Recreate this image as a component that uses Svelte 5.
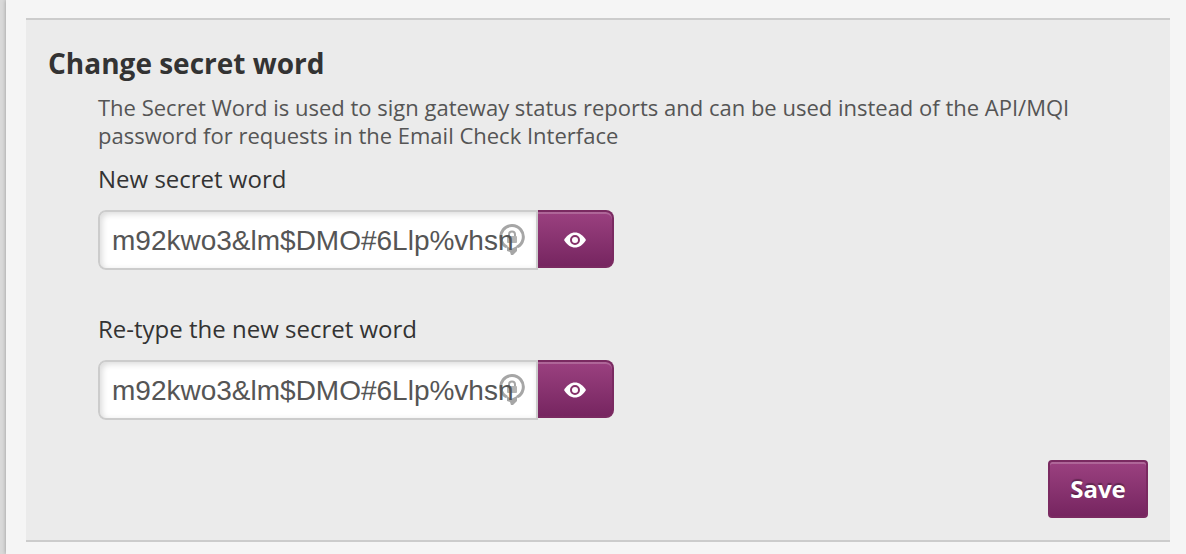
<script>
  let fields = $state([
    { id: 'new-secret', label: 'New secret word', value: 'm92kwo3&lm$DMO#6Llp%vhsn', visible: true },
    { id: 'retype-secret', label: 'Re-type the new secret word', value: 'm92kwo3&lm$DMO#6Llp%vhsn', visible: true }
  ]);

  const save = (event) => {
    event.preventDefault();
  };
</script>

<main>
  <form class="panel" onsubmit={save}>
    <h2>Change secret word</h2>

    <div class="content">
      <p class="description">
        The Secret Word is used to sign gateway status reports and can be used instead of the API/MQI
        password for requests in the Email Check Interface
      </p>

      {#each fields as field}
        <div class="field">
          <label for={field.id}>{field.label}</label>
          <div class="input-row">
            <div class="input-wrap">
              <svg class="key-icon" width="28" height="36" viewBox="0 0 28 36" aria-hidden="true">
                <path d="M9 24 A11.3 11.3 0 1 1 19 24" fill="none" stroke="#a6a6a6" stroke-width="3" />
                <path d="M9 23 L13 26 L19 23 L19 28 L15 32 L13 32 L12 29 L9 28 Z" fill="#a6a6a6" />
                <path d="M11 13 V11.5 A3 3 0 0 1 17 11.5 V13" fill="none" stroke="#a6a6a6" stroke-width="2" />
                <rect x="9" y="13" width="10" height="7" rx="1" fill="#b3b3b3" />
              </svg>
              <input id={field.id} type={field.visible ? 'text' : 'password'} autocomplete="off" spellcheck="false" bind:value={field.value} />
            </div>
            <button class="toggle" type="button" aria-label="Show or hide" onclick={() => (field.visible = !field.visible)}>
              <svg width="22" height="16" viewBox="0 0 22 16" aria-hidden="true">
                <path d="M0 8 C3 3 7 0.5 11 0.5 S19 3 22 8 C19 13 15 15.5 11 15.5 S3 13 0 8 Z" fill="#fff" />
                <circle cx="11" cy="8" r="4" fill="#fff" stroke="#853069" stroke-width="2" />
              </svg>
            </button>
          </div>
        </div>
      {/each}
    </div>

    <div class="actions">
      <button class="save" type="submit">Save</button>
    </div>
  </form>
</main>

<style>
  :global(body) {
    margin: 0;
    background: #d9d9d9;
    font-family: 'Open Sans', 'Noto Sans', sans-serif;
    color: #333;
  }

  main {
    margin-left: 6px;
    padding: 18px 16px 12px 20px;
    background: #f5f5f5;
    box-shadow: 0 0 4px rgba(0, 0, 0, 0.3);
  }

  .panel {
    padding: 27px 22px 22px;
    background: #ebebeb;
    border-top: 2px solid #ccc;
    border-bottom: 2px solid #ccc;
  }

  h2 {
    margin: 0 0 14px;
    font-size: 28px;
    line-height: 32px;
    font-weight: 700;
  }

  .content {
    padding: 0 50px;
  }

  .description {
    margin: 0 0 15px;
    font-size: 22px;
    line-height: 28px;
    color: #555;
  }

  .field + .field {
    margin-top: 44px;
  }

  label {
    display: block;
    margin-bottom: 16px;
    font-size: 24px;
    line-height: 30px;
  }

  .input-row {
    display: flex;
    align-items: flex-start;
  }

  .input-wrap {
    position: relative;
    flex: 0 1 440px;
    min-width: 0;
    border-radius: 8px 0 0 8px;
    background: #fff;
  }

  input {
    position: relative;
    display: block;
    box-sizing: border-box;
    width: 100%;
    height: 60px;
    padding: 2px 12px 0;
    border: 2px solid #ccc;
    border-radius: 8px 0 0 8px;
    background: transparent;
    box-shadow: inset 2px 2px 6px rgba(0, 0, 0, 0.15);
    font-family: 'Liberation Sans', Arial, sans-serif;
    font-size: 28px;
    color: #555;
  }

  /* sits behind the typed text */
  .key-icon {
    position: absolute;
    top: 13px;
    right: 12px;
  }

  button {
    box-sizing: border-box;
    height: 58px;
    border: 2px solid #7a2a61;
    background: linear-gradient(#9b4180, #762560);
    box-shadow: inset 0 2px 0 rgba(255, 255, 255, 0.2);
    color: #fff;
    cursor: pointer;
  }

  .toggle {
    display: flex;
    align-items: center;
    justify-content: center;
    flex: none;
    width: 76px;
    padding: 2px 0 0;
    border-left: none;
    border-radius: 0 8px 8px 0;
  }

  .actions {
    display: flex;
    justify-content: flex-end;
    margin-top: 40px;
  }

  .save {
    min-width: 100px;
    padding: 0 20px 2px;
    border-radius: 4px;
    font-family: inherit;
    font-size: 24px;
    font-weight: 700;
    text-shadow: 0 -2px 1px rgba(0, 0, 0, 0.3);
  }
</style>
